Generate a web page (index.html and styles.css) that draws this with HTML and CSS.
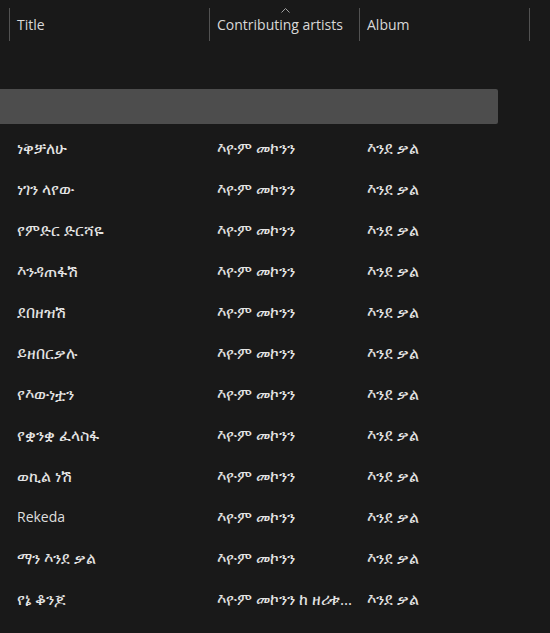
FILE: index.html
```html
<!DOCTYPE html>
<html lang="am">
<head>
<meta charset="utf-8">
<title>Music</title>
<link rel="stylesheet" href="styles.css">
</head>
<body>
<div class="view">
  <div class="header">
    <div class="hcell col-title">Title</div>
    <div class="hcell col-artist">
      <svg class="sort" width="9" height="5" viewBox="0 0 9 5"><path d="M0.5 4.5 L4.5 0.5 L8.5 4.5" fill="none" stroke="#a0a0a0" stroke-width="1"/></svg>
      Contributing artists
    </div>
    <div class="hcell col-album">Album</div>
    <div class="hend"></div>
  </div>
  <div class="spacer"></div>
  <div class="row selected"></div>
  <div class="row"><span class="c-title">ነቅቻለሁ</span><span class="c-artist">እዮም መኮንን</span><span class="c-album">እንደ ቃል</span></div>
  <div class="row"><span class="c-title">ነገን ላየው</span><span class="c-artist">እዮም መኮንን</span><span class="c-album">እንደ ቃል</span></div>
  <div class="row"><span class="c-title">የምድር ድርሻዬ</span><span class="c-artist">እዮም መኮንን</span><span class="c-album">እንደ ቃል</span></div>
  <div class="row"><span class="c-title">እንዳጠፋሽ</span><span class="c-artist">እዮም መኮንን</span><span class="c-album">እንደ ቃል</span></div>
  <div class="row"><span class="c-title">ደበዘዝሽ</span><span class="c-artist">እዮም መኮንን</span><span class="c-album">እንደ ቃል</span></div>
  <div class="row"><span class="c-title">ይዘበርቃሉ</span><span class="c-artist">እዮም መኮንን</span><span class="c-album">እንደ ቃል</span></div>
  <div class="row"><span class="c-title">የእውነቷን</span><span class="c-artist">እዮም መኮንን</span><span class="c-album">እንደ ቃል</span></div>
  <div class="row"><span class="c-title">የቋንቋ ፈላስፋ</span><span class="c-artist">እዮም መኮንን</span><span class="c-album">እንደ ቃል</span></div>
  <div class="row"><span class="c-title">ወኪል ነሽ</span><span class="c-artist">እዮም መኮንን</span><span class="c-album">እንደ ቃል</span></div>
  <div class="row"><span class="c-title en">Rekeda</span><span class="c-artist">እዮም መኮንን</span><span class="c-album">እንደ ቃል</span></div>
  <div class="row"><span class="c-title">ማን እንደ ቃል</span><span class="c-artist">እዮም መኮንን</span><span class="c-album">እንደ ቃል</span></div>
  <div class="row"><span class="c-title">የኔ ቆንጆ</span><span class="c-artist">እዮም መኮንን ከ ዘሪቱ ከበደ</span><span class="c-album">እንደ ቃል</span></div>
</div>
</body>
</html>
```
FILE: styles.css
```css
html, body {
  margin: 0;
  padding: 0;
  background: #191919;
}
body {
  width: 550px;
  height: 633px;
  overflow: hidden;
  font-family: "Open Sans", "Noto Sans", "DejaVu Sans", sans-serif;
  font-size: 14px;
  color: #dedede;
}
.view {
  display: flex;
  flex-direction: column;
}
.header {
  display: grid;
  grid-template-columns: 200px 150px 170px 1px;
  margin-left: 9px;
  margin-top: 8px;
  height: 33px;
}
.hcell {
  position: relative;
  border-left: 1px solid #525252;
  padding-left: 7px;
  display: flex;
  align-items: center;
  color: #d8d8d8;
  padding-bottom: 1px;
}
.hend {
  border-left: 1px solid #525252;
}
.sort {
  position: absolute;
  left: 71px;
  top: 0;
}
.spacer {
  height: 48px;
}
.row {
  height: 41px;
  display: grid;
  grid-template-columns: 17px 200px 150px 170px;
  align-items: center;
  white-space: nowrap;
  font-size: 15.5px;
  color: #e4e4e4;
}
.row .c-title { grid-column: 2; }
.row .c-title.en { font-size: 14px; color: #dedede; }
.row .c-artist {
  grid-column: 3;
  overflow: hidden;
  text-overflow: ellipsis;
  padding-right: 12px;
}
.row .c-album { grid-column: 4; }
.row.selected {
  height: 35px;
  width: 498px;
  margin: 0 0 3px 0;
  background: #4d4d4d;
  border-radius: 0 2px 2px 0;
}
```
